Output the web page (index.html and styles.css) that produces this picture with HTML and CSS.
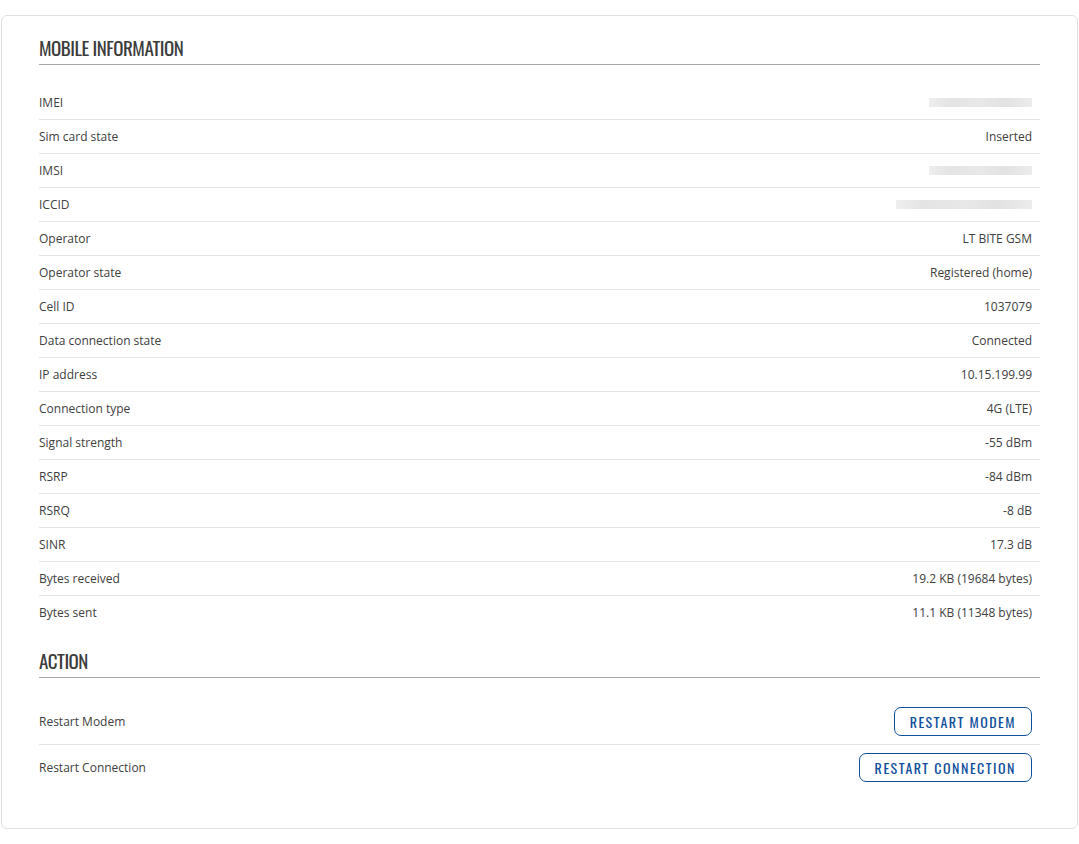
FILE: index.html
```html
<!DOCTYPE html>
<html>
<head>
<meta charset="utf-8">
<link rel="stylesheet" href="styles.css">
</head>
<body>
<div class="card">
  <h2 class="section-title">Mobile information</h2>
  <div class="info-table">
    <div class="row"><span class="label">IMEI</span><span class="value"><span class="masked" style="width:103px"></span></span></div>
    <div class="row"><span class="label">Sim card state</span><span class="value">Inserted</span></div>
    <div class="row"><span class="label">IMSI</span><span class="value"><span class="masked" style="width:103px"></span></span></div>
    <div class="row"><span class="label">ICCID</span><span class="value"><span class="masked" style="width:136px"></span></span></div>
    <div class="row"><span class="label">Operator</span><span class="value">LT BITE GSM</span></div>
    <div class="row"><span class="label">Operator state</span><span class="value">Registered (home)</span></div>
    <div class="row"><span class="label">Cell ID</span><span class="value">1037079</span></div>
    <div class="row"><span class="label">Data connection state</span><span class="value">Connected</span></div>
    <div class="row"><span class="label">IP address</span><span class="value">10.15.199.99</span></div>
    <div class="row"><span class="label">Connection type</span><span class="value">4G (LTE)</span></div>
    <div class="row"><span class="label">Signal strength</span><span class="value">-55 dBm</span></div>
    <div class="row"><span class="label">RSRP</span><span class="value">-84 dBm</span></div>
    <div class="row"><span class="label">RSRQ</span><span class="value">-8 dB</span></div>
    <div class="row"><span class="label">SINR</span><span class="value">17.3 dB</span></div>
    <div class="row"><span class="label">Bytes received</span><span class="value">19.2 KB (19684 bytes)</span></div>
    <div class="row"><span class="label">Bytes sent</span><span class="value">11.1 KB (11348 bytes)</span></div>
  </div>
  <h2 class="section-title action-title">Action</h2>
  <div class="action-table">
    <div class="action-row"><span class="label">Restart Modem</span><button class="btn">Restart modem</button></div>
    <div class="action-row"><span class="label">Restart Connection</span><button class="btn">Restart connection</button></div>
  </div>
</div>
</body>
</html>
```
FILE: styles.css
```css
html, body {
  margin: 0;
  padding: 0;
  background: #ffffff;
}
body {
  padding: 15px 1px 0 1px;
  font-family: "Open Sans", "Noto Sans", sans-serif;
  font-size: 12px;
  color: #404040;
}
.card {
  border: 1px solid #e0e0e0;
  border-radius: 6px;
  padding: 17px 37px 36px 37px;
  height: 814px;
  box-sizing: border-box;
}
.section-title {
  margin: 0;
  font-family: "Oswald", "Liberation Sans Narrow", "DejaVu Sans Condensed", sans-serif;
  font-weight: normal;
  font-size: 19px;
  line-height: 28px;
  text-transform: uppercase;
  color: #3c3c3c;
  padding-bottom: 3px;
  border-bottom: 1px solid #a8a8a8;
  letter-spacing: -0.5px;
}
.info-table {
  margin-top: 21px;
}
.row {
  display: flex;
  justify-content: space-between;
  align-items: center;
  height: 34px;
  box-sizing: border-box;
  border-bottom: 1px solid #e4e4e4;
  padding-right: 8px;
}
.row:last-child {
  border-bottom: none;
  height: 33px;
}
.value {
  display: flex;
  align-items: center;
}
.masked {
  display: block;
  height: 9px;
  background: linear-gradient(90deg, #eeeeee, #e4e4e4 20%, #e8e8e8 50%, #e2e2e2 75%, #ececec);
}
.action-title {
  margin-top: 17px;
}
.action-table {
  margin-top: 21px;
}
.action-row {
  display: flex;
  justify-content: space-between;
  align-items: center;
  height: 46px;
  box-sizing: border-box;
  padding-right: 8px;
}
.action-row:first-child {
  border-bottom: 1px solid #e4e4e4;
}
.action-row:last-child {
  height: 44px;
}
.btn {
  font-family: "Oswald", "Liberation Sans Narrow", "DejaVu Sans Condensed", sans-serif;
  font-size: 14px;
  text-transform: uppercase;
  letter-spacing: 1.5px;
  color: #0e4f9c;
  background: #ffffff;
  border: 1px solid #0e4f9c;
  border-radius: 7px;
  height: 29px;
  padding: 0 15px;
  cursor: pointer;
}
```
